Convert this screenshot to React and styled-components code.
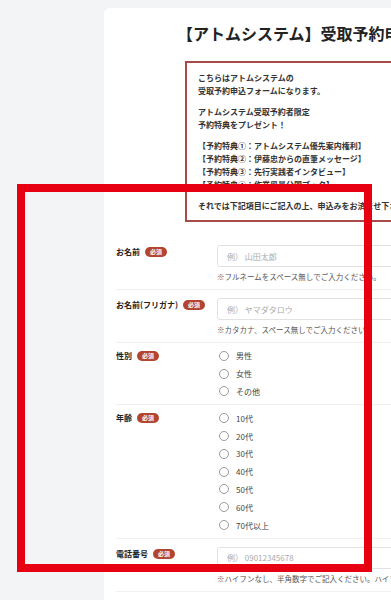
import React from "react";
import styled, { createGlobalStyle } from "styled-components";

const GlobalStyle = createGlobalStyle`
  html, body {
    margin: 0;
    padding: 0;
    overflow: hidden;
    background: #f3f4f6;
  }
  body {
    font-family: "Noto Sans CJK JP", "Noto Sans", sans-serif;
    color: #333;
  }
`;

const Page = styled.div`
  position: relative;
  width: 391px;
  height: 600px;
  overflow: hidden;
  padding-top: 8px;
  box-sizing: border-box;
`;

const Card = styled.div`
  margin-left: 104px;
  width: 620px;
  min-height: 720px;
  background: #fff;
  border-radius: 6px;
  padding: 13px 0 0 12px;
  box-sizing: border-box;
`;

const Title = styled.h1`
  margin: 0;
  padding-left: 61px;
  font-size: 16px;
  line-height: 24px;
  font-weight: 700;
  color: #222;
  white-space: nowrap;
`;

const Notice = styled.div`
  margin: 16px 0 0 69px;
  width: 420px;
  border: 2px solid #a84a46;
  padding: 8px 11px;
  font-size: 8px;
  line-height: 13px;
  font-weight: 700;
  color: #333;
  white-space: nowrap;
  p {
    margin: 0 0 8px;
  }
  p:last-child {
    margin-bottom: 0;
  }
`;

const Form = styled.div`
  margin-top: 15px;
`;

const Row = styled.div`
  display: grid;
  grid-template-columns: 101px 1fr;
  align-items: start;
  padding: ${(p) => (p.$compact ? "4px 0" : "8px 0 7px")};
  border-bottom: 1px solid #f0f0f0;
`;

const Label = styled.div`
  display: flex;
  align-items: center;
  gap: 5px;
  padding-top: ${(p) => (p.$compact ? "3px" : "1px")};
  font-size: 8px;
  line-height: 12px;
  font-weight: 700;
  color: #222;
  white-space: nowrap;
`;

const Badge = styled.span`
  display: inline-flex;
  align-items: center;
  justify-content: center;
  width: 22px;
  height: 10px;
  border-radius: 5px;
  background: #b3442f;
  color: #fff;
  font-size: 6px;
  line-height: 10px;
  font-weight: 700;
`;

const Input = styled.input`
  display: block;
  width: 420px;
  height: 22px;
  box-sizing: border-box;
  border: 1px solid #e2e2e2;
  border-radius: 3px;
  padding: 0 9px;
  font-family: inherit;
  font-size: 8px;
  color: #333;
  background: #fff;
  &::placeholder {
    color: #aaa;
  }
`;

const Hint = styled.div`
  margin-top: 4px;
  font-size: 7.5px;
  line-height: 11px;
  color: #555;
  white-space: nowrap;
`;

const Options = styled.div`
  display: flex;
  flex-direction: column;
`;

const Option = styled.label`
  display: flex;
  align-items: center;
  gap: 7px;
  height: 17.8px;
  padding-left: 2px;
  font-size: 8px;
  color: #444;
`;

const Radio = styled.span`
  width: 10px;
  height: 10px;
  box-sizing: border-box;
  border: 1px solid #9a9a9a;
  border-radius: 50%;
  background: #fff;
`;

const Annotation = styled.div`
  position: absolute;
  left: 17px;
  top: 184px;
  width: 355px;
  height: 388px;
  box-sizing: border-box;
  border: 8px solid #e60012;
  pointer-events: none;
`;

const TextField = ({ label, placeholder, hint }) => (
  <Row>
    <Label>
      {label}
      <Badge>必須</Badge>
    </Label>
    <div>
      <Input placeholder={placeholder} />
      <Hint>{hint}</Hint>
    </div>
  </Row>
);

const RadioField = ({ label, options }) => (
  <Row $compact>
    <Label $compact>
      {label}
      <Badge>必須</Badge>
    </Label>
    <Options>
      {options.map((o) => (
        <Option key={o}>
          <Radio />
          {o}
        </Option>
      ))}
    </Options>
  </Row>
);

export default function App() {
  return (
    <>
      <GlobalStyle />
      <Page>
        <Card>
          <Title>【アトムシステム】受取予約申込フォーム</Title>
          <Notice>
            <p>
              こちらはアトムシステムの
              <br />
              受取予約申込フォームになります。
            </p>
            <p>
              アトムシステム受取予約者限定
              <br />
              予約特典をプレゼント！
            </p>
            <p>
              【予約特典①：アトムシステム優先案内権利】
              <br />
              【予約特典②：伊藤忠からの直筆メッセージ】
              <br />
              【予約特典③：先行実践者インタビュー】
              <br />
              【予約特典④：作業風景公開ブック】
            </p>
            <p>それでは下記項目にご記入の上、申込みをお済ませ下さい。</p>
          </Notice>
          <Form>
            <TextField
              label="お名前"
              placeholder="例） 山田太郎"
              hint="※フルネームをスペース無しでご入力ください。"
            />
            <TextField
              label="お名前(フリガナ)"
              placeholder="例） ヤマダタロウ"
              hint="※カタカナ、スペース無しでご入力ください。"
            />
            <RadioField label="性別" options={["男性", "女性", "その他"]} />
            <RadioField
              label="年齢"
              options={["10代", "20代", "30代", "40代", "50代", "60代", "70代以上"]}
            />
            <TextField
              label="電話番号"
              placeholder="例） 09012345678"
              hint="※ハイフンなし、半角数字でご記入ください。ハイフンを含めると送信できません。"
            />
          </Form>
        </Card>
        <Annotation />
      </Page>
    </>
  );
}
